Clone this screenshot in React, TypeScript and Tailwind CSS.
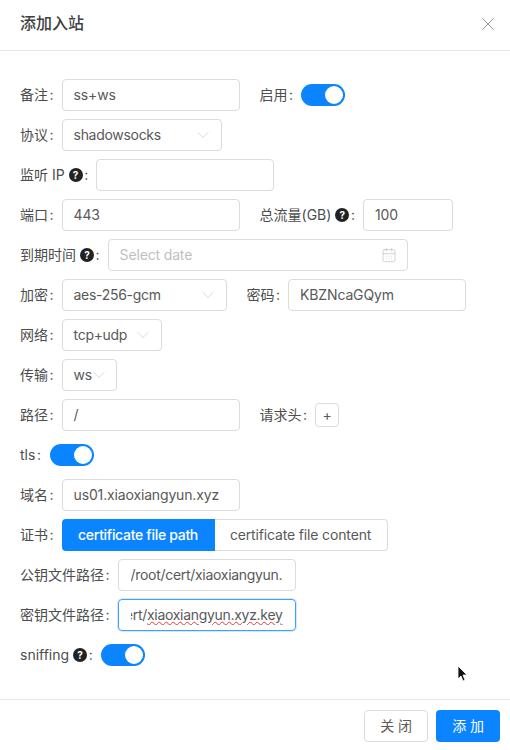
import React from "react";
import { CalendarDays, ChevronDown, X } from "lucide-react";

const font = "font-['Inter','Noto_Sans_CJK_SC',sans-serif]";

const Help = () => (
  <span className="ml-1 flex h-[14px] w-[14px] items-center justify-center rounded-full bg-[#222] text-[10px] font-bold leading-none text-white">
    ?
  </span>
);

// form label, colon sits a little off the text like antd
const Label = ({ text, help, className = "" }: { text: string; help?: boolean; className?: string }) => (
  <div className={`mr-2 flex shrink-0 items-center whitespace-nowrap tracking-normal text-[#4d4d4d] ${className}`}>
    <span>{text}</span>
    {help && <Help />}
    <span className="ml-[1.5px]">:</span>
  </div>
);

const Field = ({ value, width, placeholder }: { value?: string; width: string; placeholder?: boolean }) => (
  <div className={`flex h-8 items-center overflow-hidden rounded border border-[#dcdcdc] pl-[11px] pr-3 text-[#595959] ${width}`}>
    <span className={placeholder ? "text-[#bfbfbf]" : "whitespace-nowrap"}>{value}</span>
  </div>
);

const Select = ({ value, width }: { value: string; width: string }) => (
  <div className={`flex h-8 items-center justify-between rounded border border-[#dcdcdc] pl-[11px] pr-2 text-[#595959] ${width}`}>
    <span className="tracking-[-0.3px]">{value}</span>
    <ChevronDown size={20} strokeWidth={0.8} className="text-[#c4c4c4]" />
  </div>
);

const Switch = ({ className = "" }: { className?: string }) => (
  <div className={`flex h-[22px] w-11 items-center justify-end rounded-full bg-[#0a84ff] pr-[2px] ${className}`}>
    <div className="h-[18px] w-[18px] rounded-full bg-white" />
  </div>
);

const Row = ({ children }: { children: React.ReactNode }) => (
  <div className="mb-2 flex h-8 items-center">{children}</div>
);

export default function App() {
  return (
    <div className={`relative h-[750px] w-[510px] overflow-hidden bg-white text-sm tracking-[-0.15px] ${font}`}>
      {/* Header */}
      <div className="flex h-[51px] items-center justify-between border-b border-[#e8e8e8] pl-5 pr-[11px]">
        <div className="pb-1 text-base font-medium tracking-normal text-[#404040]">添加入站</div>
        <X size={22} strokeWidth={1} className="mb-[2px] text-[#8c8c8c]" />
      </div>

      {/* Form */}
      <div className="h-[648px] pl-5 pt-7">
        <Row>
          <Label text="备注" />
          <Field value="ss+ws" width="w-[178px]" />
          <Label text="启用" className="ml-5" />
          <Switch />
        </Row>
        <Row>
          <Label text="协议" />
          <Select value="shadowsocks" width="w-40" />
        </Row>
        <Row>
          <Label text="监听 IP" help />
          <Field width="w-[178px]" />
        </Row>
        <Row>
          <Label text="端口" />
          <Field value="443" width="w-[178px]" />
          <Label text="总流量(GB)" help className="ml-5" />
          <Field value="100" width="w-[90px]" />
        </Row>
        <Row>
          <Label text="到期时间" help />
          <div className="flex h-8 w-[300px] items-center justify-between rounded border border-[#dcdcdc] pl-[11px] pr-[10px] text-[#bfbfbf]">
            <span>Select date</span>
            <CalendarDays size={16} strokeWidth={1} />
          </div>
        </Row>
        <Row>
          <Label text="加密" />
          <Select value="aes-256-gcm" width="w-[165px]" />
          <Label text="密码" className="ml-5" />
          <Field value="KBZNcaGQym" width="w-[178px]" />
        </Row>
        <Row>
          <Label text="网络" />
          <Select value="tcp+udp" width="w-[100px]" />
        </Row>
        <Row>
          <Label text="传输" />
          <div className="flex h-8 w-[55px] items-center rounded border border-[#dcdcdc] pl-[11px] text-[#595959]">
            <span>ws</span>
            <ChevronDown size={20} strokeWidth={0.8} className="-ml-[3px] text-[#c4c4c4]" />
          </div>
        </Row>
        <Row>
          <Label text="路径" />
          <Field value="/" width="w-[178px]" />
          <Label text="请求头" className="ml-5" />
          <div className="flex h-6 w-6 items-center justify-center rounded border border-[#dcdcdc] text-[#595959]">+</div>
        </Row>
        <Row>
          <Label text="tls" />
          <Switch className="ml-px" />
        </Row>
        <Row>
          <Label text="域名" />
          <Field value="us01.xiaoxiangyun.xyz" width="w-[178px]" />
        </Row>
        <Row>
          <Label text="证书" />
          <div className="flex h-8 w-[153px] items-center justify-center rounded-l bg-[#0a84ff] font-medium tracking-[-0.3px] text-white">
            certificate file path
          </div>
          <div className="flex h-8 w-[173px] items-center justify-center rounded-r border border-l-0 border-[#dcdcdc] text-[#595959]">
            certificate file content
          </div>
        </Row>
        <Row>
          <Label text="公钥文件路径" />
          <div className="flex h-8 w-[178px] items-center rounded border border-[#dcdcdc] px-3 tracking-[-0.3px] text-[#595959]">
            <span className="overflow-hidden whitespace-nowrap">/root/cert/xiaoxiangyun.xyz.crt</span>
          </div>
        </Row>
        <Row>
          <Label text="密钥文件路径" />
          <div className="flex h-8 w-[178px] items-center justify-end rounded border border-[#40a0ff] px-3 tracking-[-0.3px] text-[#595959] shadow-[0_0_0_1px_rgba(24,144,255,0.2)]">
            <div className="flex justify-end overflow-hidden whitespace-nowrap">
              <span className="shrink-0">cert/</span>
              <span className="shrink-0 underline decoration-[#e0393e] decoration-wavy decoration-1">xiaoxiangyun.xyz.key</span>
            </div>
          </div>
        </Row>
        <Row>
          <Label text="sniffing" help />
          <Switch />
        </Row>
      </div>

      {/* Footer */}
      <div className="flex h-[51px] items-start justify-end gap-2 border-t border-[#e8e8e8] pr-[10px] pt-[10px]">
        <button className="h-8 w-16 rounded border border-[#dcdcdc] text-[#595959]">关 闭</button>
        <button className="h-8 w-16 rounded bg-[#0a84ff] text-white">添 加</button>
      </div>

      {/* mouse cursor */}
      <svg className="absolute left-[457px] top-[665px]" width="12" height="18" viewBox="0 0 12 18">
        <path d="M1 1v13l3-3 2 5 2-1-2-5h4z" fill="#111" stroke="#fff" strokeWidth="0.8" />
      </svg>
    </div>
  );
}
